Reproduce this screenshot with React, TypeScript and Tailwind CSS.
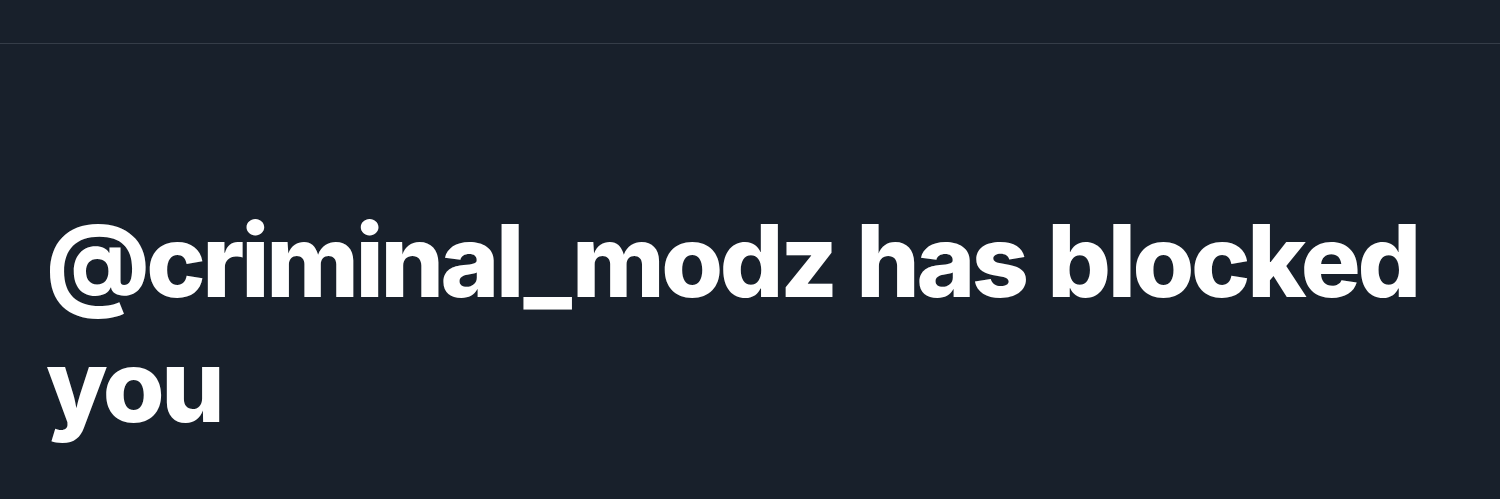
import React from 'react';

const App = () => {
  return (
    <div className="min-h-[499px] w-full bg-[#18202b] overflow-hidden">
      <div className="h-[44px] border-b border-[#353d48]" />
      <div className="pl-[46px] pr-2 pt-[154px]">
        <h1
          className="text-[100px] leading-[125px] font-extrabold text-white tracking-[-3.4px] [word-spacing:3px]"
          style={{ fontFamily: 'Inter, "Liberation Sans", sans-serif' }}
        >
          @criminal_modz has blocked you
        </h1>
      </div>
    </div>
  );
};

export default App;
